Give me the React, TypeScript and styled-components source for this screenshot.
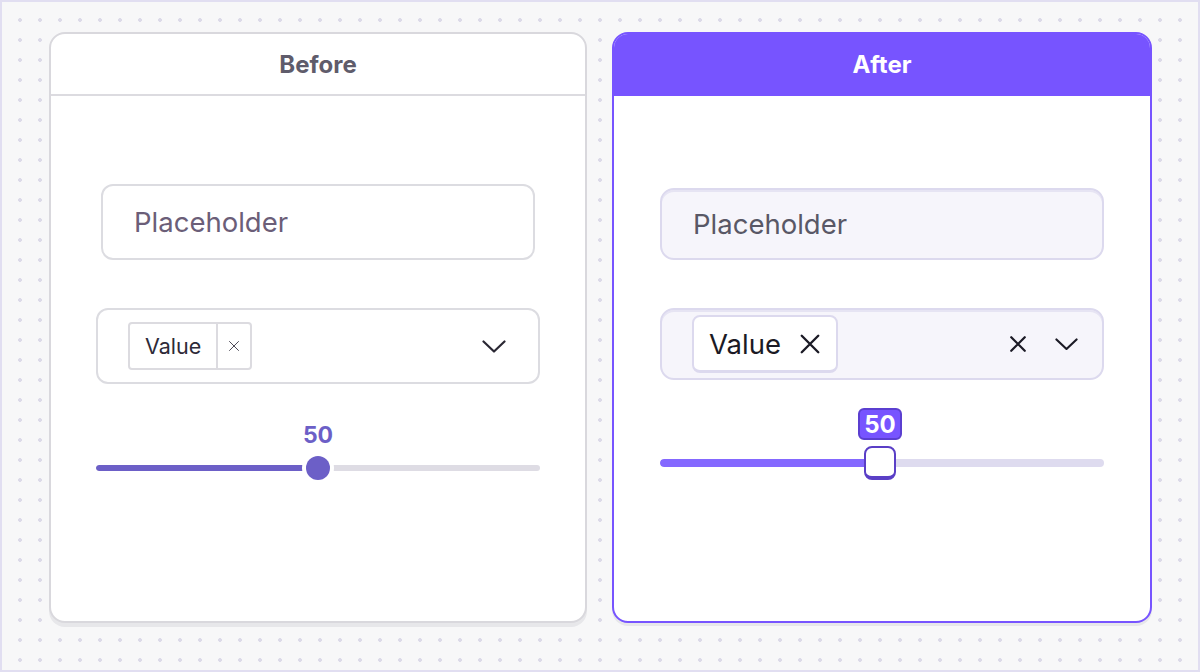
import React from 'react'
import styled, { createGlobalStyle, css } from 'styled-components'

const GlobalStyle = createGlobalStyle`
  html, body {
    margin: 0;
    padding: 0;
  }
  body {
    font-family: Inter, "Noto Sans", sans-serif;
    -webkit-font-smoothing: antialiased;
  }
`

type Variant = 'before' | 'after'

const Frame = styled.div`
  box-sizing: border-box;
  width: 1200px;
  height: 672px;
  border: 2px solid #e1def1;
  background-color: #f7f7f8;
  background-image: radial-gradient(circle, #dcdae8 1.6px, transparent 2.2px);
  background-size: 20px 20px;
  background-position: 8px 8px;
  padding: 30px 46px 47px 47px;
  display: flex;
  gap: 25px;
`

const Card = styled.section<{ $variant: Variant }>`
  display: flex;
  flex-direction: column;
  background: #fff;
  border-radius: 16px;
  overflow: hidden;
  box-sizing: border-box;
  ${(p) =>
    p.$variant === 'before'
      ? css`
          flex: 0 0 538px;
          border: 2px solid #d9d8dd;
          box-shadow: 0 4px 0 #e7e7ea;
        `
      : css`
          flex: 1;
          border: 2px solid #7754ff;
          box-shadow: 0 3px 0 #e7e7ea;
        `}
`

const Header = styled.header<{ $variant: Variant }>`
  display: flex;
  align-items: center;
  justify-content: center;
  font-size: 24px;
  font-weight: 700;
  ${(p) =>
    p.$variant === 'before'
      ? css`
          height: 60px;
          color: #5f5c6b;
          border-bottom: 2px solid #dcdbe0;
        `
      : css`
          height: 60px;
          padding-bottom: 2px;
          color: #fff;
          background: #7754ff;
        `}
`

const Body = styled.div<{ $variant: Variant }>`
  display: flex;
  flex-direction: column;
  padding: ${(p) => (p.$variant === 'before' ? '88px 45px 0' : '92px 46px 0')};
`

const Input = styled.div<{ $variant: Variant }>`
  box-sizing: border-box;
  display: flex;
  align-items: center;
  padding-left: 31px;
  font-size: 27.5px;
  ${(p) =>
    p.$variant === 'before'
      ? css`
          height: 76px;
          margin: 0 5px;
          border: 2px solid #dcdce1;
          border-radius: 12px;
          color: #6b5e78;
        `
      : css`
          height: 72px;
          border: 2px solid #dcd9ee;
          box-shadow: inset 0 2px 0 #e6e4f3;
          border-radius: 14px;
          background: #f6f5fb;
          color: #595866;
        `}
`

const Select = styled.div<{ $variant: Variant }>`
  box-sizing: border-box;
  display: flex;
  align-items: center;
  margin-top: 48px;
  ${(p) =>
    p.$variant === 'before'
      ? css`
          height: 76px;
          padding: 0 32px 0 30px;
          border: 2px solid #dcdce1;
          border-radius: 12px;
        `
      : css`
          height: 72px;
          padding: 0 24px 0 30px;
          border: 2px solid #dcd9ee;
          box-shadow: inset 0 2px 0 #e6e4f3;
          border-radius: 14px;
          background: #f6f5fb;
        `}
`

const Chip = styled.div<{ $variant: Variant }>`
  box-sizing: border-box;
  display: flex;
  align-items: stretch;
  ${(p) =>
    p.$variant === 'before'
      ? css`
          height: 48px;
          border: 2px solid #dcdbe0;
          border-radius: 4px;
          font-size: 21.5px;
          color: #2d2a38;
        `
      : css`
          height: 58px;
          border: 2px solid #dcd9ee;
          border-bottom-width: 3px;
          border-radius: 8px;
          background: #fff;
          font-size: 27.5px;
          color: #1b1a25;
        `}
`

const ChipLabel = styled.span<{ $variant: Variant }>`
  display: flex;
  align-items: center;
  padding: ${(p) => (p.$variant === 'before' ? '0 15px 0 15px' : '0 18px 0 15px')};
`

const ChipRemove = styled.span<{ $variant: Variant }>`
  display: flex;
  align-items: center;
  justify-content: center;
  ${(p) =>
    p.$variant === 'before'
      ? css`
          width: 32px;
          border-left: 2px solid #dcdbe0;
          color: #3a3745;
        `
      : css`
          padding-right: 15px;
          color: #1b1a25;
        `}
`

const Spacer = styled.div`
  flex: 1;
`

const Indicators = styled.div`
  display: flex;
  align-items: center;
  gap: 28px;
  color: #1b1a25;
`

const Slider = styled.div<{ $variant: Variant }>`
  display: flex;
  flex-direction: column;
  align-items: center;
  margin-top: ${(p) => (p.$variant === 'before' ? '39px' : '28px')};
`

const ValueLabel = styled.div<{ $variant: Variant }>`
  font-weight: 700;
  ${(p) =>
    p.$variant === 'before'
      ? css`
          font-size: 23px;
          line-height: 25px;
          color: #6c5fc7;
          margin-bottom: 8px;
        `
      : css`
          box-sizing: border-box;
          width: 44px;
          height: 32px;
          display: flex;
          align-items: center;
          justify-content: center;
          font-size: 24px;
          color: #fff;
          background: #7754ff;
          border: 2px solid #5b3fd0;
          border-radius: 6px;
          margin-bottom: 6px;
          transform: translateX(-2px);
        `}
`

const TrackArea = styled.div<{ $variant: Variant }>`
  position: relative;
  align-self: stretch;
  display: flex;
  align-items: center;
  height: ${(p) => (p.$variant === 'before' ? '24px' : '34px')};
`

const Track = styled.div<{ $variant: Variant }>`
  position: relative;
  flex: 1;
  height: ${(p) => (p.$variant === 'before' ? '6px' : '8px')};
  border-radius: 4px;
  overflow: hidden;
  background: ${(p) => (p.$variant === 'before' ? '#dedce4' : '#dedbef')};
`

const Fill = styled.div<{ $variant: Variant }>`
  height: 100%;
  border-radius: 4px;
  background: ${(p) => (p.$variant === 'before' ? '#6c5fc7' : '#8468ff')};
`

const Thumb = styled.div<{ $variant: Variant }>`
  position: absolute;
  top: 50%;
  box-sizing: border-box;
  ${(p) =>
    p.$variant === 'before'
      ? css`
          transform: translate(-50%, -50%);
          width: 24px;
          height: 24px;
          border-radius: 50%;
          background: #6c5fc7;
          box-shadow: 0 0 0 4px #fff;
        `
      : css`
          transform: translate(calc(-50% - 2px), -50%);
          width: 32px;
          height: 34px;
          border-radius: 8px;
          background: #fff;
          border: 2px solid #5a3fc6;
          border-bottom-width: 4px;
        `}
`

const CloseIcon = ({ size, stroke }: { size: number; stroke: number }) => (
  <svg width={size} height={size} viewBox="0 0 24 24" fill="none">
    <path d="M3 3L21 21M21 3L3 21" stroke="currentColor" strokeWidth={stroke} strokeLinecap="round" />
  </svg>
)

const Chevron = ({ width }: { width: number }) => (
  <svg width={width} height={width / 2 + 1} viewBox="0 0 24 13" fill="none">
    <path d="M1.5 1.5L12 11.5L22.5 1.5" stroke="currentColor" strokeWidth={2.2} strokeLinecap="round" strokeLinejoin="round" />
  </svg>
)

const ChevronWrap = styled.span<{ $variant: Variant }>`
  display: flex;
  color: ${(p) => (p.$variant === 'before' ? '#2a2733' : '#1b1a25')};
`

const Panel = ({ variant, title }: { variant: Variant; title: string }) => {
  const value = 50
  const before = variant === 'before'
  return (
    <Card $variant={variant}>
      <Header $variant={variant}>{title}</Header>
      <Body $variant={variant}>
        <Input $variant={variant}>Placeholder</Input>
        <Select $variant={variant}>
          <Chip $variant={variant}>
            <ChipLabel $variant={variant}>Value</ChipLabel>
            <ChipRemove $variant={variant}>
              {before ? <CloseIcon size={12} stroke={1.8} /> : <CloseIcon size={22} stroke={2.6} />}
            </ChipRemove>
          </Chip>
          <Spacer />
          {before ? (
            <ChevronWrap $variant={variant}>
              <Chevron width={24} />
            </ChevronWrap>
          ) : (
            <Indicators>
              <CloseIcon size={18} stroke={3} />
              <ChevronWrap $variant={variant}>
                <Chevron width={23} />
              </ChevronWrap>
            </Indicators>
          )}
        </Select>
        <Slider $variant={variant}>
          <ValueLabel $variant={variant}>{value}</ValueLabel>
          <TrackArea $variant={variant}>
            <Track $variant={variant}>
              <Fill $variant={variant} style={{ width: `${value}%` }} />
            </Track>
            <Thumb $variant={variant} style={{ left: `${value}%` }} />
          </TrackArea>
        </Slider>
      </Body>
    </Card>
  )
}

export default function App() {
  return (
    <>
      <GlobalStyle />
      <Frame>
        <Panel variant="before" title="Before" />
        <Panel variant="after" title="After" />
      </Frame>
    </>
  )
}
